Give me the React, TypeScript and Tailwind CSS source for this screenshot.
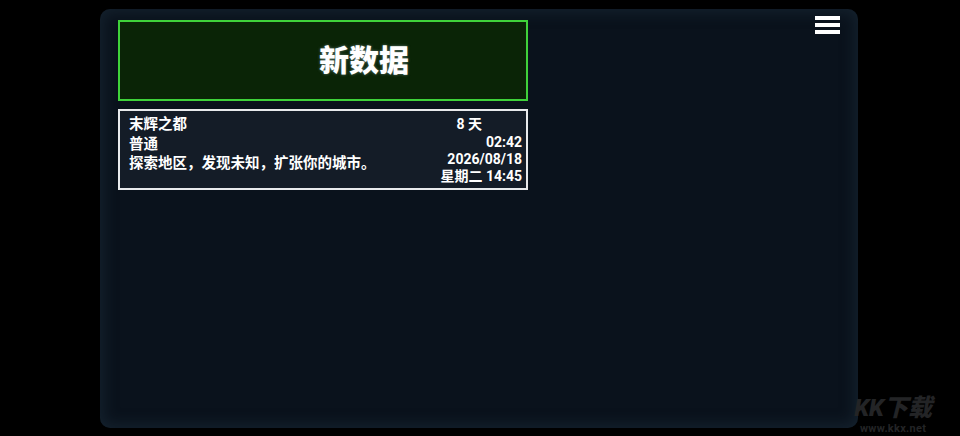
import React from 'react'

const cjk = { fontFamily: 'Roboto, "Noto Sans CJK SC", sans-serif' }

function Menu() {
  return (
    <div className="absolute right-[18px] top-[7px] flex w-[25px] flex-col gap-[3px]">
      <span className="block h-[4px] bg-white" />
      <span className="block h-[4px] bg-white" />
      <span className="block h-[4px] bg-white" />
    </div>
  )
}

export default function App() {
  return (
    <div className="relative h-[436px] w-[960px] overflow-hidden bg-black" style={cjk}>
      <div className="relative ml-[100px] mt-[9px] h-[419px] w-[758px] rounded-[10px] bg-[#0a121c] px-[18px] pt-[11px] shadow-[inset_0_0_14px_4px_rgba(30,48,62,0.5)]">
        <Menu />
        <div className="flex h-[81px] w-[410px] items-center justify-center border-2 border-[#3fd23a] bg-[#0a2406] pl-[82px]">
          <span className="text-[30px] font-black leading-none text-white [text-shadow:0_0_3px_rgba(180,200,220,0.5)]">新数据</span>
        </div>
        <div className="mt-[8px] flex h-[81px] w-[410px] justify-between border-2 border-[#e8eaec] bg-[#141c27] pl-[9px] pr-[4px] pt-[4px] text-[14px] font-bold leading-[19.5px] text-white">
          <div className="flex flex-col text-[14.5px]">
            <span>末辉之都</span>
            <span>普通</span>
            <span>探索地区，发现未知，扩张你的城市。</span>
          </div>
          <div className="flex flex-col items-end leading-[17px]">
            <span className="mr-[40px] leading-[19px]">8 天</span>
            <span>02:42</span>
            <span>2026/08/18</span>
            <span>星期二 14:45</span>
          </div>
        </div>
      </div>
      <div className="absolute bottom-[1px] right-[28px] flex flex-col items-center text-[#232426]">
        <span className="text-[24px] font-black italic leading-[26px]">KK下载</span>
        <span className="mt-[2px] text-[11px] font-bold leading-[12px] tracking-wide">www.kkx.net</span>
      </div>
    </div>
  )
}
